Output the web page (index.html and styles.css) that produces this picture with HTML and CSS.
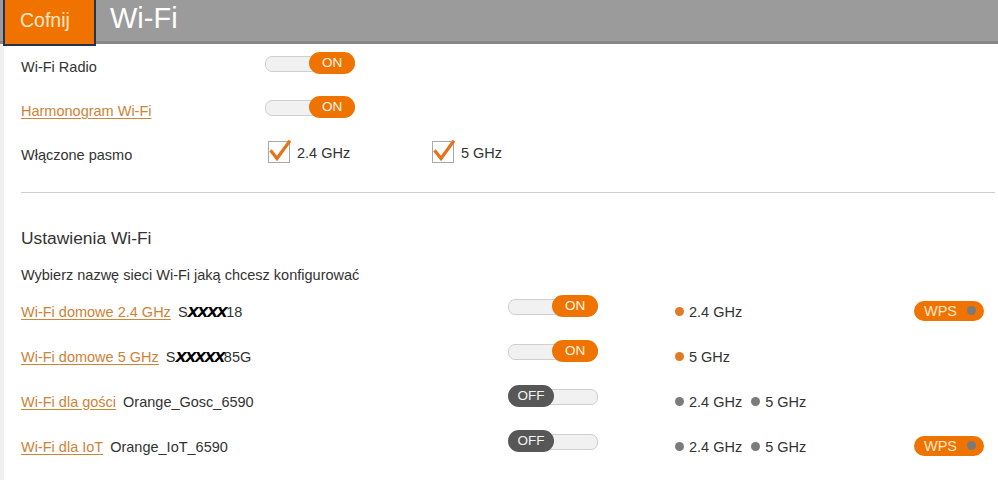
FILE: index.html
```html
<!DOCTYPE html>
<html lang="pl">
<head>
<meta charset="utf-8">
<title>Wi-Fi</title>
<link rel="stylesheet" href="styles.css">
</head>
<body>
<header class="topbar">
  <a class="back" href="#">Cofnij</a>
  <h1 class="title">Wi-Fi</h1>
</header>
<div class="main">
  <div class="gutter"></div>
  <div class="content">
    <div class="setting">
      <span class="label">Wi-Fi Radio</span>
      <span class="toggle on"><span class="knob">ON</span></span>
    </div>
    <div class="setting">
      <a class="label link" href="#">Harmonogram Wi-Fi</a>
      <span class="toggle on"><span class="knob">ON</span></span>
    </div>
    <div class="setting">
      <span class="label">Włączone pasmo</span>
      <div class="bands">
        <label class="check">
          <svg class="box" width="24" height="25" viewBox="0 0 24 25"><rect x="1.5" y="2.5" width="21" height="21" fill="#fff" stroke="#a8a8a8"/><path d="M4.5 12.5 L10 19.5 L22 3" fill="none" stroke="#e8711b" stroke-width="3.2" stroke-linecap="square"/></svg>
          <span>2.4 GHz</span>
        </label>
        <label class="check">
          <svg class="box" width="24" height="25" viewBox="0 0 24 25"><rect x="1.5" y="2.5" width="21" height="21" fill="#fff" stroke="#a8a8a8"/><path d="M4.5 12.5 L10 19.5 L22 3" fill="none" stroke="#e8711b" stroke-width="3.2" stroke-linecap="square"/></svg>
          <span>5 GHz</span>
        </label>
      </div>
    </div>
    <hr class="divider">
    <h2 class="section-title">Ustawienia Wi-Fi</h2>
    <p class="hint">Wybierz nazwę sieci Wi-Fi jaką chcesz konfigurować</p>
    <div class="networks">
      <div class="net">
        <span class="name"><a class="link" href="#">Wi-Fi domowe 2.4 GHz</a><span class="ssid">S<span class="mask">XXXX</span>18</span></span>
        <span class="toggle on"><span class="knob">ON</span></span>
        <span class="freqs"><span class="freq"><i class="dot active"></i>2.4 GHz</span></span>
        <span class="wps">WPS<i class="wdot"></i></span>
      </div>
      <div class="net">
        <span class="name"><a class="link" href="#">Wi-Fi domowe 5 GHz</a><span class="ssid">S<span class="mask">XXXXX</span>85G</span></span>
        <span class="toggle on"><span class="knob">ON</span></span>
        <span class="freqs"><span class="freq"><i class="dot active"></i>5 GHz</span></span>
        <span></span>
      </div>
      <div class="net">
        <span class="name"><a class="link" href="#">Wi-Fi dla gości</a><span class="ssid">Orange_Gosc_6590</span></span>
        <span class="toggle off"><span class="knob">OFF</span></span>
        <span class="freqs"><span class="freq"><i class="dot"></i>2.4 GHz</span><span class="freq"><i class="dot"></i>5 GHz</span></span>
        <span></span>
      </div>
      <div class="net">
        <span class="name"><a class="link" href="#">Wi-Fi dla IoT</a><span class="ssid">Orange_IoT_6590</span></span>
        <span class="toggle off"><span class="knob">OFF</span></span>
        <span class="freqs"><span class="freq"><i class="dot"></i>2.4 GHz</span><span class="freq"><i class="dot"></i>5 GHz</span></span>
        <span class="wps">WPS<i class="wdot"></i></span>
      </div>
    </div>
  </div>
</div>
</body>
</html>
```
FILE: styles.css
```css
* { box-sizing: border-box; }
html, body { margin: 0; padding: 0; background: #fff; }
body {
  font-family: "Liberation Sans", Arial, sans-serif;
  font-size: 14.5px;
  color: #333;
  width: 998px;
  height: 480px;
  overflow: hidden;
}
.topbar {
  display: flex;
  align-items: flex-start;
  height: 44px;
  background: #9b9b9b;
  border-bottom: 3px solid #878787;
  position: relative;
  z-index: 1;
}
.back {
  display: block;
  margin: 0 0 0 3px;
  width: 93px;
  height: 46px;
  padding: 8px 0 0 15px;
  background: #f07300;
  color: #fde8c8;
  text-decoration: none;
  font-size: 19.5px;
  line-height: 24px;
  border: 2px solid #22324f;
  border-top: none;
  flex: none;
}
.title {
  margin: 1px 0 0 14px;
  font-size: 29px;
  line-height: 34px;
  font-weight: normal;
  color: #fff;
}
.main {
  display: flex;
  height: 436px;
}
.gutter {
  width: 4px;
  background: #efefef;
  flex: none;
}
.content {
  flex: 1;
  padding: 1px 3px 0 17px;
}
.setting {
  display: grid;
  grid-template-columns: 244px auto;
  align-items: center;
  height: 44px;
}
.label { line-height: 18px; }
.link {
  color: #cd8338;
  text-decoration: underline;
  text-underline-offset: 2px;
}
.toggle {
  position: relative;
  display: flex;
  align-items: center;
  width: 90px;
  height: 22px;
  margin-bottom: 9px;
}
.toggle::before {
  content: "";
  position: absolute;
  left: 0;
  right: 0;
  top: 4px;
  height: 14px;
  border: 1px solid #cfcfcf;
  background: #f1f1f1;
  border-radius: 7px;
}
.knob {
  position: relative;
  width: 46px;
  height: 22px;
  border-radius: 11px;
  background: #ef7300;
  color: #fff6ea;
  font-size: 13.5px;
  line-height: 22px;
  text-align: center;
}
.toggle.on .knob { margin-left: auto; }
.toggle.off .knob { background: #575757; color: #f4f4f4; }
.bands {
  display: grid;
  grid-template-columns: 164px auto;
  margin-left: 2px;
  margin-bottom: 4px;
}
.check {
  display: flex;
  align-items: center;
  gap: 6px;
}
.check .box { margin-bottom: 4px; }
.divider {
  margin: 15px 0 0 0;
  border: none;
  border-top: 1px solid #cdcdcd;
  height: 0;
}
.section-title {
  margin: 35px 0 0 0;
  font-size: 17.4px;
  line-height: 20px;
  font-weight: normal;
  color: #333;
}
.hint {
  margin: 18px 0 0 0;
  line-height: 18px;
}
.networks { margin-top: 5px; }
.net {
  display: grid;
  grid-template-columns: 487px 167px 239px 70px;
  align-items: center;
  height: 45px;
}
.name { line-height: 18px; }
.ssid { margin-left: 7px; }
.mask {
  font-family: "DejaVu Sans", sans-serif;
  font-weight: 900;
  font-style: italic;
  color: #000;
  letter-spacing: -1.5px;
}
.net .toggle { margin-bottom: 11px; }
.freqs { display: flex; gap: 9px; }
.freq { display: flex; align-items: center; }
.dot {
  width: 9px;
  height: 9px;
  border-radius: 50%;
  background: #7b7b7b;
  margin-right: 5px;
}
.dot.active { background: #e27a22; }
.wps {
  display: flex;
  align-items: center;
  justify-content: space-between;
  width: 70px;
  height: 20px;
  padding: 0 8px 0 10px;
  border-radius: 10px;
  background: #ef7300;
  color: #fde8c8;
  font-size: 14.5px;
  margin-bottom: 2px;
}
.wdot {
  width: 9px;
  height: 9px;
  border-radius: 50%;
  background: #7a7a7a;
}
```
